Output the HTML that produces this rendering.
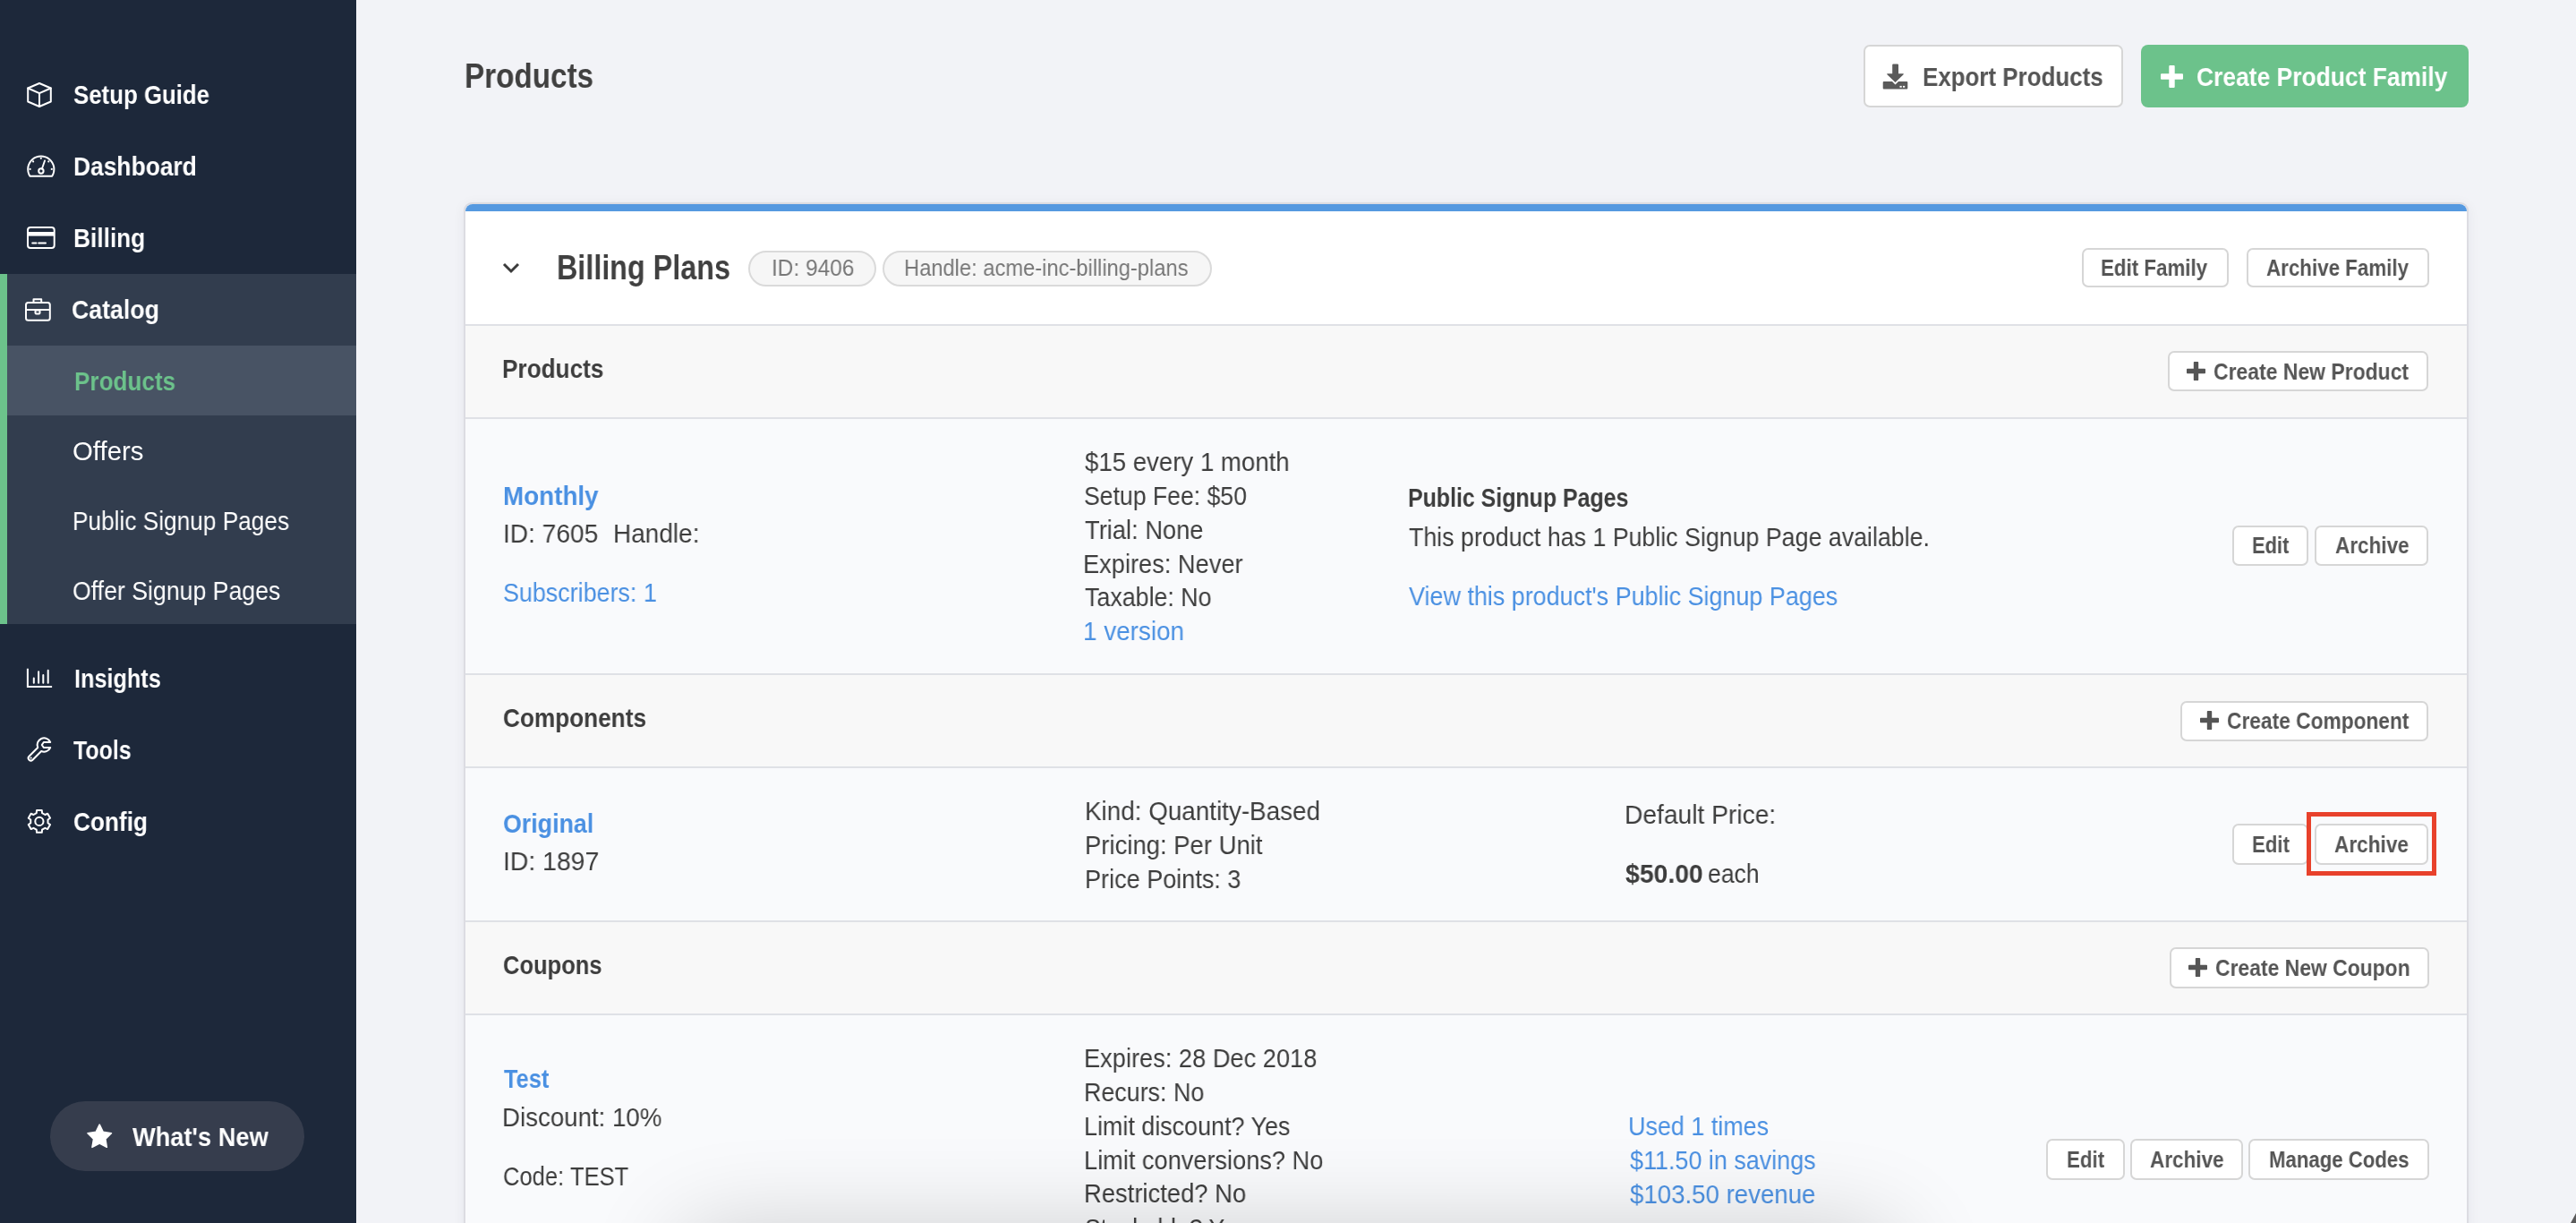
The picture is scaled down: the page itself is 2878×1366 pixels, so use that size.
<!DOCTYPE html>
<html><head><meta charset="utf-8"><title>Products</title>
<style>
html,body{margin:0;padding:0}
body{width:2878px;height:1366px;overflow:hidden;position:relative;background:#f2f3f7;font-family:"Liberation Sans",sans-serif}
.t{position:absolute;white-space:pre;line-height:40px;transform-origin:0 0;will-change:transform}
.ic{position:absolute;overflow:visible}
.abs{position:absolute}
.btn{position:absolute;box-sizing:border-box;background:#fff;border:2px solid #d6d6d6;border-radius:7px}
</style></head><body>
<!-- sidebar -->
<div class="abs" style="left:0;top:0;width:398px;height:1366px;background:#1d283a"></div>
<div class="abs" style="left:0;top:306px;width:398px;height:391px;background:#323d4e"></div>
<div class="abs" style="left:8px;top:386px;width:390px;height:78px;background:#485364"></div>
<div class="abs" style="left:0;top:306px;width:8px;height:391px;background:#6cc28b"></div>
<div class="abs" style="left:56px;top:1230px;width:284px;height:78px;border-radius:39px;background:#363d4d"></div>

<svg class="ic" style="left:28px;top:90px" width="32" height="32" viewBox="0 0 32 32" fill="none" stroke="#ffffff" stroke-width="2" stroke-linejoin="round" stroke-linecap="round">
 <path d="M16 3 L28.8 8.5 L28.8 23.5 L16 29 L3.2 23.5 L3.2 8.5 Z"/><path d="M3.2 8.5 L16 14.2 L28.8 8.5 M16 14.2 L16 29"/>
</svg>
<svg class="ic" style="left:28px;top:170px" width="36" height="30" viewBox="0 0 36 30" fill="none" stroke="#ffffff" stroke-width="2" stroke-linecap="round">
 <path d="M5.4 26.7 A14.6 14.6 0 1 1 30.2 26.7 Z" stroke-linejoin="round"/>
 <circle cx="17.9" cy="21" r="2.7" stroke-width="2"/>
 <path d="M18.9 18.5 L22 9.5" stroke-width="1.9"/>
 <g fill="#ffffff" stroke="none"><circle cx="17.8" cy="6.8" r="1.1"/><circle cx="9.1" cy="10.4" r="1.1"/><circle cx="26.3" cy="10.4" r="1.1"/><circle cx="5.6" cy="18.9" r="1.1"/><circle cx="29.8" cy="18.9" r="1.1"/></g>
</svg>
<svg class="ic" style="left:28px;top:250px" width="36" height="30" viewBox="0 0 36 30" fill="none" stroke="#ffffff" stroke-width="2">
 <rect x="3" y="4" width="29.7" height="23" rx="3"/>
 <rect x="3" y="9" width="29.7" height="4.6" fill="#ffffff" stroke="none"/>
 <path d="M8.2 21.5 H12.5 M15.2 21.5 H23" stroke-linecap="round"/>
</svg>
<svg class="ic" style="left:26px;top:331px" width="32" height="30" viewBox="0 0 32 30" fill="none" stroke="#ffffff" stroke-width="2" stroke-linejoin="round">
 <rect x="3" y="7" width="26.8" height="19.8" rx="2.5"/>
 <path d="M11.5 6.8 V3.2 H20.2 V6.8"/>
 <path d="M3 15 H29.8"/>
 <rect x="13.5" y="15.5" width="5" height="4" rx="1"/>
</svg>
<svg class="ic" style="left:28px;top:744px" width="34" height="28" viewBox="0 0 34 28" fill="none" stroke="#ffffff" stroke-width="2">
 <path d="M2.9 2.8 V23 H30.1"/>
 <path d="M9.8 13.4 V18.7 M15.1 6.3 V18.7 M20.3 10.1 V18.7 M25.7 4.8 V18.7" stroke-linecap="round"/>
</svg>
<svg class="ic" style="left:0px;top:0px" width="80" height="900" viewBox="0 0 80 900" fill="none" stroke="#ffffff" stroke-width="2" stroke-linejoin="round">
 <path d="M42.22 835.02 L32.52 844.72 A2.8 2.8 0 0 0 36.48 848.68 L46.18 838.98 A7.6 7.6 0 0 0 56.2 835 L48.8 835 L46.8 832 L48.8 829 L56.2 829 A7.6 7.6 0 1 0 42.22 835.02 Z"/>
 <circle cx="34.6" cy="846.6" r="1.1" fill="#ffffff" stroke="none"/>
</svg>
<svg class="ic" style="left:26px;top:900px" width="36" height="36" viewBox="0 0 36 36" fill="none" stroke="#ffffff" stroke-width="2" stroke-linejoin="round">
 <path d="M14.71 8.13 L15.04 5.03 L20.76 5.03 L21.09 8.13 L24.33 10.00 L27.19 8.74 L30.05 13.69 L27.52 15.53 L27.52 19.27 L30.05 21.11 L27.19 26.06 L24.33 24.80 L21.09 26.67 L20.76 29.77 L15.04 29.77 L14.71 26.67 L11.47 24.80 L8.61 26.06 L5.75 21.11 L8.28 19.27 L8.28 15.53 L5.75 13.69 L8.61 8.74 L11.47 10.00 Z"/>
 <circle cx="17.9" cy="17.4" r="4.6"/>
</svg>

<svg class="ic" style="left:96px;top:1254px" width="32" height="32" viewBox="0 0 32 32"><path fill="#fff" stroke="#fff" stroke-width="1.6" stroke-linejoin="round" d="M15.2 2.2 L19.2 10.4 L28.4 11.8 L21.8 18.2 L23.3 27.3 L15.2 23 L7 27.3 L8.6 18.2 L2 11.8 L11.2 10.4 Z"/></svg>

<!-- header buttons -->
<div class="btn" style="left:2082px;top:50px;width:290px;height:70px;border-radius:7px"></div>
<svg class="ic" style="left:2102px;top:70px" width="32" height="32" viewBox="0 0 32 32"><path fill="#5a5a5a" d="M12.2 2.4 Q12.2 1.4 13.2 1.4 H18 Q19 1.4 19 2.4 V12.3 H24.2 Q25.4 12.4 24.6 13.2 L15.5 22.1 L6.4 13.2 Q5.6 12.4 6.8 12.3 H12.2 Z"/><path fill="#5a5a5a" d="M2.7 21 H12 L15.5 24.5 L19 21 H28.3 Q29.3 21 29.3 22 V28.4 Q29.3 29.4 28.3 29.4 H2.7 Q1.7 29.4 1.7 28.4 V22 Q1.7 21 2.7 21 Z"/><rect x="20.5" y="25.9" width="2.2" height="1.8" fill="#fff"/><rect x="24" y="25.9" width="2.2" height="1.8" fill="#fff"/></svg>
<div class="abs" style="left:2392px;top:50px;width:366px;height:70px;border-radius:8px;background:#6cc28b"></div>
<svg class="ic" style="left:2414px;top:73px" width="25" height="25" viewBox="0 0 25 25"><path fill="#fff" d="M9.3 1 Q9.3 0 10.3 0 H14.7 Q15.7 0 15.7 1 V9.3 H24 Q25 9.3 25 10.3 V14.7 Q25 15.7 24 15.7 H15.7 V24 Q15.7 25 14.7 25 H10.3 Q9.3 25 9.3 24 V15.7 H1 Q0 15.7 0 14.7 V10.3 Q0 9.3 1 9.3 H9.3 Z"/></svg>

<!-- card -->
<div class="abs" style="left:518px;top:226px;width:2240px;height:1300px;box-sizing:border-box;border:2px solid #dcdce2;border-radius:9px;background:#f9fafc;box-shadow:0 2px 14px rgba(30,40,60,0.06)"></div>
<div class="abs" style="left:520px;top:228px;width:2236px;height:8px;background:#5599e0;border-radius:8px 8px 0 0"></div>
<div class="abs" style="left:520px;top:236px;width:2236px;height:126px;background:#ffffff"></div>
<div class="abs" style="left:520px;top:362px;width:2236px;height:2px;background:#dfe1e6"></div>
<div class="abs" style="left:520px;top:364px;width:2236px;height:102px;background:#f8f8f8"></div>
<div class="abs" style="left:520px;top:466px;width:2236px;height:2px;background:#dfe1e6"></div>
<div class="abs" style="left:520px;top:752px;width:2236px;height:2px;background:#dfe1e6"></div>
<div class="abs" style="left:520px;top:754px;width:2236px;height:102px;background:#f8f8f8"></div>
<div class="abs" style="left:520px;top:856px;width:2236px;height:2px;background:#dfe1e6"></div>
<div class="abs" style="left:520px;top:1028px;width:2236px;height:2px;background:#dfe1e6"></div>
<div class="abs" style="left:520px;top:1030px;width:2236px;height:102px;background:#f8f8f8"></div>
<div class="abs" style="left:520px;top:1132px;width:2236px;height:2px;background:#dfe1e6"></div>

<!-- chevron -->
<svg class="ic" style="left:560px;top:291px" width="22" height="17" viewBox="0 0 22 17"><path d="M3 4 L11 12 L19 4" fill="none" stroke="#3c3c3c" stroke-width="3"/></svg>
<!-- pills -->
<div class="abs" style="left:836px;top:280px;width:143px;height:40px;box-sizing:border-box;border:2px solid #dadada;border-radius:20px;background:#f6f6f6"></div>
<div class="abs" style="left:986px;top:280px;width:368px;height:40px;box-sizing:border-box;border:2px solid #dadada;border-radius:20px;background:#f6f6f6"></div>
<!-- header buttons -->
<div class="btn" style="left:2326px;top:276.7px;width:163.5px;height:44.7px"></div>
<div class="btn" style="left:2510px;top:276.7px;width:203.5px;height:44.7px"></div>

<div class="btn" style="left:2422px;top:392px;width:291px;height:45px"></div>
<svg class="ic" style="left:2443px;top:404px" width="21" height="21" viewBox="0 0 25 25"><path fill="#555" d="M9.3 1 Q9.3 0 10.3 0 H14.7 Q15.7 0 15.7 1 V9.3 H24 Q25 9.3 25 10.3 V14.7 Q25 15.7 24 15.7 H15.7 V24 Q15.7 25 14.7 25 H10.3 Q9.3 25 9.3 24 V15.7 H1 Q0 15.7 0 14.7 V10.3 Q0 9.3 1 9.3 H9.3 Z"/></svg>
<div class="btn" style="left:2494px;top:587px;width:85px;height:45px"></div>
<div class="btn" style="left:2586px;top:587px;width:127px;height:45px"></div>

<div class="btn" style="left:2436px;top:783px;width:277px;height:45px"></div>
<svg class="ic" style="left:2457.7px;top:794.4px" width="21" height="21" viewBox="0 0 25 25"><path fill="#555" d="M9.3 1 Q9.3 0 10.3 0 H14.7 Q15.7 0 15.7 1 V9.3 H24 Q25 9.3 25 10.3 V14.7 Q25 15.7 24 15.7 H15.7 V24 Q15.7 25 14.7 25 H10.3 Q9.3 25 9.3 24 V15.7 H1 Q0 15.7 0 14.7 V10.3 Q0 9.3 1 9.3 H9.3 Z"/></svg>
<div class="btn" style="left:2494px;top:920px;width:85px;height:46px"></div>
<div class="btn" style="left:2586px;top:920px;width:127px;height:46px"></div>

<div class="btn" style="left:2424px;top:1058px;width:290px;height:46px"></div>
<svg class="ic" style="left:2445px;top:1070px" width="21" height="21" viewBox="0 0 25 25"><path fill="#555" d="M9.3 1 Q9.3 0 10.3 0 H14.7 Q15.7 0 15.7 1 V9.3 H24 Q25 9.3 25 10.3 V14.7 Q25 15.7 24 15.7 H15.7 V24 Q15.7 25 14.7 25 H10.3 Q9.3 25 9.3 24 V15.7 H1 Q0 15.7 0 14.7 V10.3 Q0 9.3 1 9.3 H9.3 Z"/></svg>
<div class="btn" style="left:2286px;top:1272px;width:88px;height:46px"></div>
<div class="btn" style="left:2380px;top:1272px;width:126px;height:46px"></div>
<div class="btn" style="left:2512px;top:1272px;width:202px;height:46px"></div>

<div class="t" style="left:82.40px;top:86px;font-size:29.5px;font-weight:700;color:#ffffff;transform:scaleX(0.8752);">Setup Guide</div><div class="t" style="left:81.51px;top:166px;font-size:29.5px;font-weight:700;color:#ffffff;transform:scaleX(0.8944);">Dashboard</div><div class="t" style="left:81.51px;top:246px;font-size:29.5px;font-weight:700;color:#ffffff;transform:scaleX(0.8910);">Billing</div><div class="t" style="left:79.70px;top:326px;font-size:29.5px;font-weight:700;color:#ffffff;transform:scaleX(0.9043);">Catalog</div><div class="t" style="left:82.50px;top:406px;font-size:29px;font-weight:700;color:#6cc28b;transform:scaleX(0.9000);">Products</div><div class="t" style="left:81.39px;top:484px;font-size:29px;font-weight:400;color:#ffffff;transform:scaleX(1.0126);">Offers</div><div class="t" style="left:80.59px;top:562px;font-size:29px;font-weight:400;color:#ffffff;transform:scaleX(0.9045);">Public Signup Pages</div><div class="t" style="left:81.48px;top:640px;font-size:29px;font-weight:400;color:#ffffff;transform:scaleX(0.9200);">Offer Signup Pages</div><div class="t" style="left:82.54px;top:738px;font-size:29.5px;font-weight:700;color:#ffffff;transform:scaleX(0.8560);">Insights</div><div class="t" style="left:82.40px;top:818px;font-size:29.5px;font-weight:700;color:#ffffff;transform:scaleX(0.8466);">Tools</div><div class="t" style="left:81.71px;top:898px;font-size:29.5px;font-weight:700;color:#ffffff;transform:scaleX(0.8888);">Config</div><div class="t" style="left:147.80px;top:1250px;font-size:29.5px;font-weight:700;color:#ffffff;transform:scaleX(0.9232);">What's New</div><div class="t" style="left:518.67px;top:65px;font-size:38.5px;font-weight:700;color:#404040;transform:scaleX(0.8633);">Products</div><div class="t" style="left:2148.12px;top:66px;font-size:29.5px;font-weight:700;color:#555555;transform:scaleX(0.8791);">Export Products</div><div class="t" style="left:2454.40px;top:66px;font-size:29.5px;font-weight:700;color:#ffffff;transform:scaleX(0.8954);">Create Product Family</div><div class="t" style="left:622.42px;top:279px;font-size:38.5px;font-weight:700;color:#404040;transform:scaleX(0.8395);">Billing Plans</div><div class="t" style="left:861.56px;top:279px;font-size:26.5px;font-weight:400;color:#777777;transform:scaleX(0.9216);">ID: 9406</div><div class="t" style="left:1010.11px;top:279px;font-size:26.5px;font-weight:400;color:#777777;transform:scaleX(0.8945);">Handle: acme-inc-billing-plans</div><div class="t" style="left:2347.44px;top:279px;font-size:26px;font-weight:700;color:#555555;transform:scaleX(0.8587);">Edit Family</div><div class="t" style="left:2532.40px;top:279px;font-size:26px;font-weight:700;color:#555555;transform:scaleX(0.8598);">Archive Family</div><div class="t" style="left:561.15px;top:392px;font-size:30px;font-weight:700;color:#3d3d3d;transform:scaleX(0.8725);">Products</div><div class="t" style="left:2472.90px;top:395px;font-size:25.5px;font-weight:700;color:#555555;transform:scaleX(0.8998);">Create New Product</div><div class="t" style="left:561.65px;top:534px;font-size:30px;font-weight:700;color:#4a90e2;transform:scaleX(0.9268);">Monthly</div><div class="t" style="left:562.06px;top:576px;font-size:29px;font-weight:400;color:#3d3d3d;transform:scaleX(0.9700);">ID: 7605</div><div class="t" style="left:685.17px;top:576px;font-size:29px;font-weight:400;color:#3d3d3d;transform:scaleX(0.9646);">Handle:</div><div class="t" style="left:562.17px;top:642px;font-size:29px;font-weight:400;color:#4a90e2;transform:scaleX(0.9273);">Subscribers: 1</div><div class="t" style="left:1212.00px;top:496px;font-size:29px;font-weight:400;color:#3d3d3d;transform:scaleX(0.9520);">$15 every 1 month</div><div class="t" style="left:1211.08px;top:534px;font-size:29px;font-weight:400;color:#3d3d3d;transform:scaleX(0.9175);">Setup Fee: $50</div><div class="t" style="left:1212.00px;top:572px;font-size:29px;font-weight:400;color:#3d3d3d;transform:scaleX(0.9418);">Trial: None</div><div class="t" style="left:1210.12px;top:610px;font-size:29px;font-weight:400;color:#3d3d3d;transform:scaleX(0.9389);">Expires: Never</div><div class="t" style="left:1212.00px;top:647px;font-size:29px;font-weight:400;color:#3d3d3d;transform:scaleX(0.9243);">Taxable: No</div><div class="t" style="left:1210.08px;top:685px;font-size:29px;font-weight:400;color:#4a90e2;transform:scaleX(0.9603);">1 version</div><div class="t" style="left:1572.74px;top:536px;font-size:30px;font-weight:700;color:#3d3d3d;transform:scaleX(0.8305);">Public Signup Pages</div><div class="t" style="left:1574.00px;top:580px;font-size:29px;font-weight:400;color:#3d3d3d;transform:scaleX(0.9232);">This product has 1 Public Signup Page available.</div><div class="t" style="left:1574.00px;top:646px;font-size:29px;font-weight:400;color:#4a90e2;transform:scaleX(0.9286);">View this product's Public Signup Pages</div><div class="t" style="left:2516.34px;top:589px;font-size:25.5px;font-weight:700;color:#555555;transform:scaleX(0.8580);">Edit</div><div class="t" style="left:2608.60px;top:589px;font-size:25.5px;font-weight:700;color:#555555;transform:scaleX(0.8836);">Archive</div><div class="t" style="left:561.73px;top:782px;font-size:30px;font-weight:700;color:#3d3d3d;transform:scaleX(0.8726);">Components</div><div class="t" style="left:2487.51px;top:785px;font-size:25.5px;font-weight:700;color:#555555;transform:scaleX(0.8919);">Create Component</div><div class="t" style="left:562.11px;top:900px;font-size:30px;font-weight:700;color:#4a90e2;transform:scaleX(0.8936);">Original</div><div class="t" style="left:562.04px;top:942px;font-size:29px;font-weight:400;color:#3d3d3d;transform:scaleX(0.9793);">ID: 1897</div><div class="t" style="left:1211.58px;top:886px;font-size:29px;font-weight:400;color:#3d3d3d;transform:scaleX(0.9597);">Kind: Quantity-Based</div><div class="t" style="left:1211.61px;top:924px;font-size:29px;font-weight:400;color:#3d3d3d;transform:scaleX(0.9472);">Pricing: Per Unit</div><div class="t" style="left:1211.63px;top:962px;font-size:29px;font-weight:400;color:#3d3d3d;transform:scaleX(0.9329);">Price Points: 3</div><div class="t" style="left:1814.86px;top:890px;font-size:29px;font-weight:400;color:#3d3d3d;transform:scaleX(0.9717);">Default Price:</div><div class="t" style="left:1816.20px;top:956px;font-size:29px;font-weight:700;color:#3d3d3d;transform:scaleX(0.9775);">$50.00</div><div class="t" style="left:1907.68px;top:956px;font-size:29px;font-weight:400;color:#3d3d3d;transform:scaleX(0.9151);">each</div><div class="t" style="left:2516.13px;top:923px;font-size:25.5px;font-weight:700;color:#555555;transform:scaleX(0.8706);">Edit</div><div class="t" style="left:2608.40px;top:923px;font-size:25.5px;font-weight:700;color:#555555;transform:scaleX(0.8869);">Archive</div><div class="t" style="left:561.85px;top:1058px;font-size:30px;font-weight:700;color:#3d3d3d;transform:scaleX(0.8504);">Coupons</div><div class="t" style="left:2475.10px;top:1061px;font-size:25.5px;font-weight:700;color:#555555;transform:scaleX(0.8982);">Create New Coupon</div><div class="t" style="left:562.70px;top:1185px;font-size:30px;font-weight:700;color:#4a90e2;transform:scaleX(0.8475);">Test</div><div class="t" style="left:560.79px;top:1228px;font-size:29px;font-weight:400;color:#3d3d3d;transform:scaleX(0.9539);">Discount: 10%</div><div class="t" style="left:561.82px;top:1294px;font-size:29px;font-weight:400;color:#3d3d3d;transform:scaleX(0.8820);">Code: TEST</div><div class="t" style="left:1210.72px;top:1162px;font-size:29px;font-weight:400;color:#3d3d3d;transform:scaleX(0.9389);">Expires: 28 Dec 2018</div><div class="t" style="left:1210.75px;top:1200px;font-size:29px;font-weight:400;color:#3d3d3d;transform:scaleX(0.9259);">Recurs: No</div><div class="t" style="left:1210.74px;top:1238px;font-size:29px;font-weight:400;color:#3d3d3d;transform:scaleX(0.9282);">Limit discount? Yes</div><div class="t" style="left:1210.73px;top:1276px;font-size:29px;font-weight:400;color:#3d3d3d;transform:scaleX(0.9371);">Limit conversions? No</div><div class="t" style="left:1210.71px;top:1313px;font-size:29px;font-weight:400;color:#3d3d3d;transform:scaleX(0.9445);">Restricted? No</div><div class="t" style="left:1211.68px;top:1352px;font-size:29px;font-weight:400;color:#3d3d3d;transform:scaleX(0.9171);">Stackable? Yes</div><div class="t" style="left:1818.74px;top:1238px;font-size:29px;font-weight:400;color:#4a90e2;transform:scaleX(0.9285);">Used 1 times</div><div class="t" style="left:1820.60px;top:1276px;font-size:29px;font-weight:400;color:#4a90e2;transform:scaleX(0.9289);">$11.50 in savings</div><div class="t" style="left:1820.60px;top:1314px;font-size:29px;font-weight:400;color:#4a90e2;transform:scaleX(0.9526);">$103.50 revenue</div><div class="t" style="left:2308.73px;top:1275px;font-size:25.5px;font-weight:700;color:#555555;transform:scaleX(0.8748);">Edit</div><div class="t" style="left:2401.80px;top:1275px;font-size:25.5px;font-weight:700;color:#555555;transform:scaleX(0.8836);">Archive</div><div class="t" style="left:2534.63px;top:1275px;font-size:25.5px;font-weight:700;color:#555555;transform:scaleX(0.8698);">Manage Codes</div>

<!-- red highlight -->
<div class="abs" style="left:2577px;top:906.5px;width:145px;height:71px;box-sizing:border-box;border:5px solid #e8412b"></div>
<!-- bottom shadow of off-screen element -->
<div class="abs" style="left:775px;top:1390px;width:1330px;height:200px;border-radius:12px;background:#fff;box-shadow:0 0 110px 12px rgba(0,0,0,0.2)"></div>
<svg class="ic" style="left:2868px;top:1352px" width="10" height="14" viewBox="0 0 10 14"><path d="M10 3 L10 14 L4 14 Z" fill="#5a5a5a"/></svg>
</body></html>
